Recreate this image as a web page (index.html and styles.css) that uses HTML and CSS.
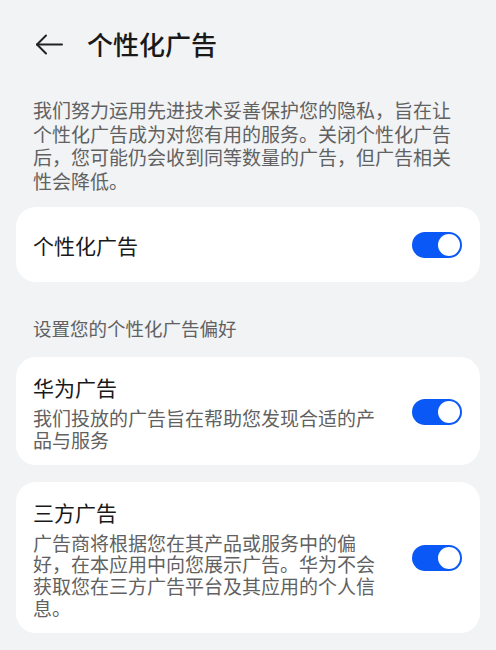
FILE: index.html
```html
<!DOCTYPE html>
<html lang="zh-CN">
<head>
  <meta charset="UTF-8">
  <meta name="viewport" content="width=device-width, initial-scale=1.0">
  <title>个性化广告</title>
  <link rel="stylesheet" href="styles.css">
</head>
<body>
  <div class="page">
    <div class="header">
      <svg class="back-icon" width="28" height="21" viewBox="0 0 28 21" fill="none" stroke="currentColor" stroke-width="2" stroke-linecap="round" stroke-linejoin="round">
        <line x1="2" y1="10.5" x2="27" y2="10.5"></line>
        <polyline points="11 1.5 2 10.5 11 19.5"></polyline>
      </svg>
      <h1>个性化广告</h1>
    </div>

    <p class="intro">我们努力运用先进技术妥善保护您的隐私，旨在让个性化广告成为对您有用的服务。关闭个性化广告后，您可能仍会收到同等数量的广告，但广告相关性会降低。</p>

    <div class="card card-single">
      <div class="item-text">
        <div class="item-title">个性化广告</div>
      </div>
      <div class="switch on"><span class="knob"></span></div>
    </div>

    <div class="section-label">设置您的个性化广告偏好</div>

    <div class="card">
      <div class="item-text">
        <div class="item-title">华为广告</div>
        <div class="item-desc">我们投放的广告旨在帮助您发现合适的产品与服务</div>
      </div>
      <div class="switch on"><span class="knob"></span></div>
    </div>

    <div class="card">
      <div class="item-text">
        <div class="item-title">三方广告</div>
        <div class="item-desc">广告商将根据您在其产品或服务中的偏好，在本应用中向您展示广告。华为不会获取您在三方广告平台及其应用的个人信息。</div>
      </div>
      <div class="switch on"><span class="knob"></span></div>
    </div>
  </div>
</body>
</html>
```

FILE: styles.css
```css
:root {
  --bg: #f1f3f5;
  --card: #ffffff;
  --text: #191919;
  --text-secondary: #616161;
  --primary: #0a59f7;
}

* {
  margin: 0;
  padding: 0;
  box-sizing: border-box;
}

body {
  width: 496px;
  height: 650px;
  overflow: hidden;
  background-color: var(--bg);
  color: var(--text);
  font-family: "Noto Sans CJK SC", "Noto Sans", sans-serif;
}

.page {
  display: flex;
  flex-direction: column;
}

.header {
  display: flex;
  align-items: center;
  height: 88px;
  padding: 0 35px;
  gap: 24px;
}

.back-icon {
  color: #222;
  flex-shrink: 0;
}

h1 {
  font-size: 26px;
  font-weight: 500;
  line-height: 34px;
}

.intro {
  margin-top: 10px;
  padding: 0 33px;
  font-size: 19px;
  line-height: 23.5px;
  color: var(--text-secondary);
}

.card {
  display: flex;
  align-items: center;
  gap: 29px;
  margin: 0 16px;
  padding: 16px 18px 14px 17px;
  background-color: var(--card);
  border-radius: 20px;
}

.card + .card {
  margin-top: 17px;
}

.card-single {
  margin-top: 15px;
  height: 75px;
  padding-top: 0;
  padding-bottom: 0;
}

.item-text {
  flex: 1;
}

.item-title {
  font-size: 21px;
  line-height: 28px;
  color: var(--text);
}

.item-desc {
  margin-top: 6px;
  font-size: 19px;
  line-height: 21.8px;
  color: var(--text-secondary);
}

.section-label {
  margin: 34px 0 17px;
  padding: 0 33px;
  font-size: 18.5px;
  line-height: 24px;
  color: var(--text-secondary);
}

.switch {
  position: relative;
  flex-shrink: 0;
  width: 50px;
  height: 26px;
  border-radius: 13px;
  background-color: #c8c8c8;
}

.switch.on {
  background-color: var(--primary);
}

.knob {
  position: absolute;
  top: 2px;
  right: 2px;
  width: 22px;
  height: 22px;
  border-radius: 50%;
  background-color: #ffffff;
}
```
